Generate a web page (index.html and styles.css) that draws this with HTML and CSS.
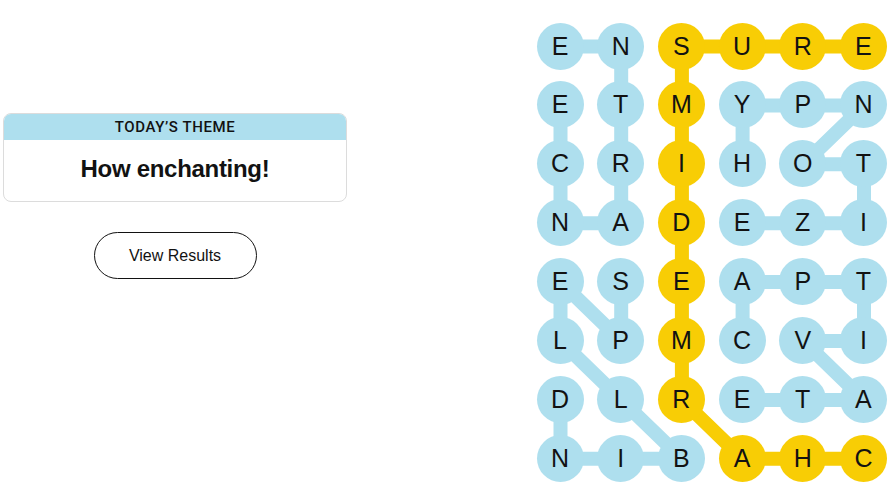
FILE: index.html
```html
<!DOCTYPE html>
<html lang="en">
<head>
<meta charset="utf-8">
<title>Strands</title>
<link rel="stylesheet" href="styles.css">
</head>
<body>
<div class="page">
  <section class="side">
    <div class="theme-card">
      <div class="theme-head">TODAY’S THEME</div>
      <div class="theme-body">How enchanting!</div>
    </div>
    <button class="results-btn" type="button">View Results</button>
  </section>

  <section class="board">
    <svg class="links" width="351" height="460" viewBox="0 0 351 460" aria-hidden="true">
      <g stroke="#aedfee" stroke-width="14" fill="none">
        <!-- ENTRANCE -->
        <polyline points="23.5,23.5 84.2,23.5 84.2,82.4 84.2,141.3 84.2,200.2 23.5,200.2 23.5,141.3 23.5,82.4"/>
        <!-- HYPNOTIZE -->
        <polyline points="205.6,141.3 205.6,82.4 266.3,82.4 327,82.4 266.3,141.3 327,141.3 327,200.2 266.3,200.2 205.6,200.2"/>
        <!-- SPELLBIND -->
        <polyline points="84.2,259.1 84.2,318 23.5,259.1 23.5,318 84.2,376.9 144.9,435.8 84.2,435.8 23.5,435.8 23.5,376.9"/>
        <!-- CAPTIVATE -->
        <polyline points="205.6,318 205.6,259.1 266.3,259.1 327,259.1 327,318 266.3,318 327,376.9 266.3,376.9 205.6,376.9"/>
      </g>
      <g stroke="#f8cd05" stroke-width="14" fill="none">
        <polyline points="327,23.5 266.3,23.5 205.6,23.5 144.9,23.5 144.9,82.4 144.9,141.3 144.9,200.2 144.9,259.1 144.9,318 144.9,376.9 205.6,435.8 266.3,435.8 327,435.8"/>
      </g>
    </svg>
    <div class="grid">
      <span class="cell">E</span><span class="cell">N</span><span class="cell gold">S</span><span class="cell gold">U</span><span class="cell gold">R</span><span class="cell gold">E</span>
      <span class="cell">E</span><span class="cell">T</span><span class="cell gold">M</span><span class="cell">Y</span><span class="cell">P</span><span class="cell">N</span>
      <span class="cell">C</span><span class="cell">R</span><span class="cell gold">I</span><span class="cell">H</span><span class="cell">O</span><span class="cell">T</span>
      <span class="cell">N</span><span class="cell">A</span><span class="cell gold">D</span><span class="cell">E</span><span class="cell">Z</span><span class="cell">I</span>
      <span class="cell">E</span><span class="cell">S</span><span class="cell gold">E</span><span class="cell">A</span><span class="cell">P</span><span class="cell">T</span>
      <span class="cell">L</span><span class="cell">P</span><span class="cell gold">M</span><span class="cell">C</span><span class="cell">V</span><span class="cell">I</span>
      <span class="cell">D</span><span class="cell">L</span><span class="cell gold">R</span><span class="cell">E</span><span class="cell">T</span><span class="cell">A</span>
      <span class="cell">N</span><span class="cell">I</span><span class="cell">B</span><span class="cell gold">A</span><span class="cell gold">H</span><span class="cell gold">C</span>
    </div>
  </section>
</div>
</body>
</html>
```

FILE: styles.css
```css
* { box-sizing: border-box; }

html, body {
  margin: 0;
  padding: 0;
  background: #ffffff;
  color: #121212;
  font-family: "Liberation Sans", Arial, sans-serif;
}

.page {
  display: flex;
  align-items: flex-start;
  padding: 22.5px 0 0 3px;
  width: 893px;
  height: 503px;
}

.side {
  width: 344px;
  margin-top: 90.5px;
  display: flex;
  flex-direction: column;
  align-items: center;
}

.theme-card {
  width: 100%;
  border: 1px solid #dcdcdc;
  border-radius: 8px;
  overflow: hidden;
}

.theme-head {
  background: #aedfee;
  height: 26px;
  display: flex;
  align-items: center;
  justify-content: center;
  font-family: Roboto, "Liberation Sans", Arial, sans-serif;
  font-size: 15px;
  font-weight: 500;
  letter-spacing: 0.6px;
  color: #121212;
}

.theme-body {
  height: 61px;
  display: flex;
  align-items: center;
  justify-content: center;
  padding-bottom: 3px;
  font-size: 24px;
  font-weight: 700;
  letter-spacing: -0.3px;
  color: #121212;
}

.results-btn {
  margin-top: 30px;
  width: 163px;
  height: 47px;
  border: 1px solid #121212;
  border-radius: 24px;
  background: #ffffff;
  font-family: "Liberation Sans", Arial, sans-serif;
  font-size: 16px;
  color: #121212;
  padding: 0;
}

.board {
  position: relative;
  margin-left: 189.5px;
  width: 351px;
  height: 460px;
}

.links {
  position: absolute;
  left: 0;
  top: 0;
}

.grid {
  position: relative;
  display: grid;
  grid-template-columns: repeat(6, 47px);
  grid-auto-rows: 47px;
  column-gap: 13.7px;
  row-gap: 11.9px;
}

.cell {
  width: 47px;
  height: 47px;
  border-radius: 50%;
  background: #aedfee;
  display: flex;
  align-items: center;
  justify-content: center;
  font-size: 25px;
  color: #121212;
  line-height: 1;
}

.cell.gold {
  background: #f8cd05;
}
```
